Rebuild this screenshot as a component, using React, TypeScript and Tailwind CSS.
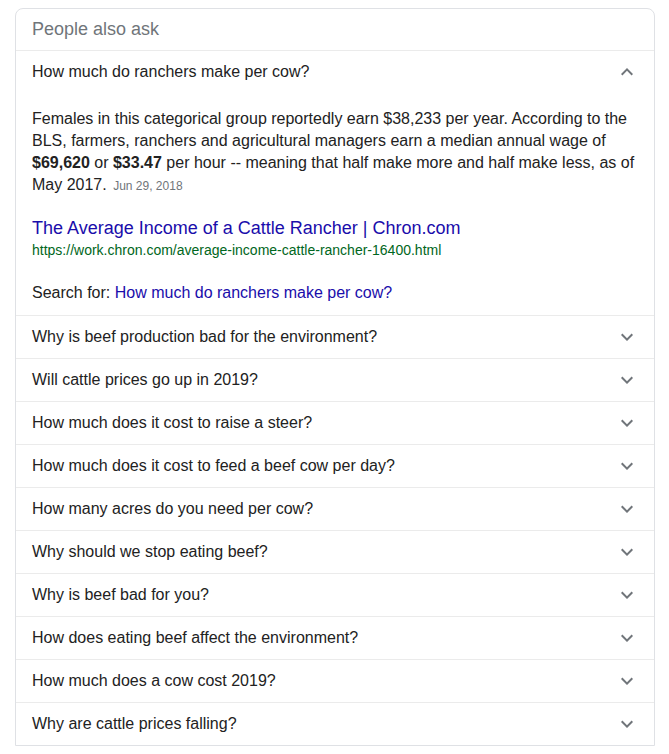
import React from 'react'

const questions = [
  'Why is beef production bad for the environment?',
  'Will cattle prices go up in 2019?',
  'How much does it cost to raise a steer?',
  'How much does it cost to feed a beef cow per day?',
  'How many acres do you need per cow?',
  'Why should we stop eating beef?',
  'Why is beef bad for you?',
  'How does eating beef affect the environment?',
  'How much does a cow cost 2019?',
  'Why are cattle prices falling?',
]

function Chevron({ up = false }: { up?: boolean }) {
  return (
    <svg width="24" height="24" viewBox="0 0 24 24" className={up ? 'rotate-180' : ''}>
      <path d="M16.59 8.59L12 13.17 7.41 8.59 6 10l6 6 6-6z" fill="#70757a" />
    </svg>
  )
}

function Row({ q }: { q: string }) {
  return (
    <div className="h-[43px] border-t border-[#ebebeb] flex items-center justify-between pl-4 pr-[15px]">
      <span className="text-[16px] text-[#222]">{q}</span>
      <Chevron />
    </div>
  )
}

export default function App() {
  return (
    <div className="min-h-screen bg-white pt-2 px-[15px] font-['Liberation_Sans',Arial,sans-serif]">
      <div className="w-[640px] border border-[#dfe1e5] rounded-t-lg">
        <div className="h-[41px] flex items-center px-4 text-[18px] text-[#70757a]">
          People also ask
        </div>

        <div className="border-t border-[#ebebeb]">
          <div className="h-[42px] flex items-center justify-between pl-4 pr-[15px]">
            <span className="text-[16px] text-[#222]">How much do ranchers make per cow?</span>
            <Chevron up />
          </div>
          <div className="px-4 pt-[15px] pb-[11px]">
            <p className="text-[16px] leading-[22px] text-[#222]">
              Females in this categorical group reportedly earn $38,233 per year. According to the
              BLS, farmers, ranchers and agricultural managers earn a median annual wage of{' '}
              <b>$69,620</b> or <b>$33.47</b> per hour -- meaning that half make more and half make
              less, as of May 2017.{' '}
              <span className="text-[12px] text-[#70757a] ml-0.5">Jun 29, 2018</span>
            </p>
            <div className="mt-[19px] text-[18px] leading-[24px] text-[#1a0dab]">
              The Average Income of a Cattle Rancher | Chron.com
            </div>
            <div className="text-[14px] leading-[20px] text-[#006621]">
              https://work.chron.com/average-income-cattle-rancher-16400.html
            </div>
            <div className="mt-[22px] text-[16px] leading-[22px] text-[#222]">
              Search for: <span className="text-[#1a0dab]">How much do ranchers make per cow?</span>
            </div>
          </div>
        </div>

        {questions.map((q) => (
          <Row key={q} q={q} />
        ))}
      </div>
    </div>
  )
}
